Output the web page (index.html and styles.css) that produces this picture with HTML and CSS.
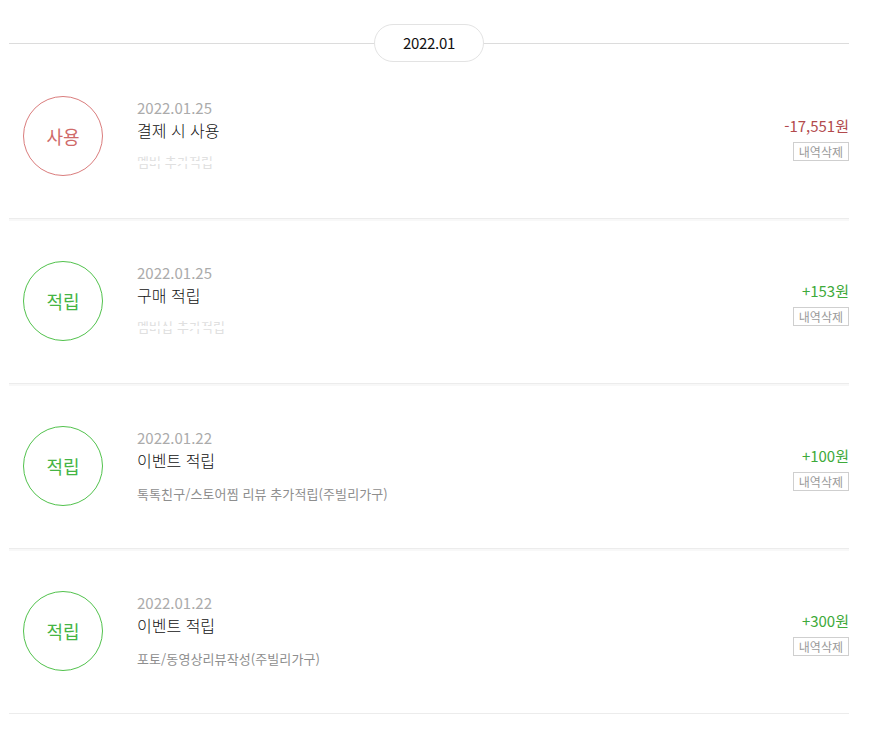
FILE: index.html
```html
<!DOCTYPE html>
<html lang="ko">
<head>
<meta charset="utf-8">
<link rel="stylesheet" href="styles.css">
</head>
<body>
<div class="list">
  <div class="month">
    <span class="month-pill">2022.01</span>
  </div>

  <div class="row first">
    <div class="badge use">사용</div>
    <div class="info">
      <div class="date">2022.01.25</div>
      <div class="title">결제 시 사용</div>
      <div class="desc masked">멤버 추가적립</div>
    </div>
    <div class="side">
      <div class="amount minus">-17,551원</div>
      <button class="del">내역삭제</button>
    </div>
  </div>

  <div class="row">
    <div class="badge save">적립</div>
    <div class="info">
      <div class="date">2022.01.25</div>
      <div class="title">구매 적립</div>
      <div class="desc masked">멤버십 추가적립</div>
    </div>
    <div class="side">
      <div class="amount plus">+153원</div>
      <button class="del">내역삭제</button>
    </div>
  </div>

  <div class="row">
    <div class="badge save">적립</div>
    <div class="info">
      <div class="date">2022.01.22</div>
      <div class="title">이벤트 적립</div>
      <div class="desc">톡톡친구/스토어찜 리뷰 추가적립(주빌리가구)</div>
    </div>
    <div class="side">
      <div class="amount plus">+100원</div>
      <button class="del">내역삭제</button>
    </div>
  </div>

  <div class="row">
    <div class="badge save">적립</div>
    <div class="info">
      <div class="date">2022.01.22</div>
      <div class="title">이벤트 적립</div>
      <div class="desc">포토/동영상리뷰작성(주빌리가구)</div>
    </div>
    <div class="side">
      <div class="amount plus">+300원</div>
      <button class="del">내역삭제</button>
    </div>
  </div>
</div>
</body>
</html>
```

FILE: styles.css
```css
html, body {
  margin: 0;
  padding: 0;
  background: #fff;
}
body {
  font-family: "Noto Sans CJK KR", "Noto Sans", sans-serif;
  color: #111;
}
.list {
  width: 840px;
  margin-left: 9px;
}
.month {
  height: 62px;
  display: flex;
  align-items: flex-end;
  justify-content: center;
  position: relative;
}
.month::before {
  content: "";
  position: absolute;
  left: 0;
  right: 0;
  top: 43px;
  border-top: 1px solid #dcdcdc;
}
.month-pill {
  position: relative;
  box-sizing: border-box;
  width: 110px;
  height: 38px;
  border: 1px solid #e3e3e3;
  border-radius: 19px;
  background: #fff;
  font-size: 15px;
  line-height: 36px;
  text-align: center;
  color: #111;
  letter-spacing: -0.3px;
}
.row {
  display: flex;
  align-items: flex-start;
  padding: 42px 0 42px 14px;
  border-bottom: 1px solid #ececec;
  box-shadow: 0 2px 0 #f8f8f8;
}
.row.first {
  padding-top: 34px;
}
.badge {
  box-sizing: border-box;
  flex: none;
  width: 80px;
  height: 80px;
  border-radius: 50%;
  border: 1px solid;
  display: flex;
  align-items: center;
  justify-content: center;
  font-size: 18px;
}
.badge.use {
  border-color: #da7d7d;
  color: #cf6a6a;
}
.badge.save {
  border-color: #52c24d;
  color: #45b545;
}
.info {
  flex: 1;
  margin-left: 34px;
  padding-top: 2px;
}
.date {
  font-size: 15px;
  line-height: 20px;
  color: #ababab;
}
.title {
  font-size: 16px;
  line-height: 24px;
  color: #111;
  font-weight: 300;
}
.desc {
  margin-top: 12px;
  font-size: 13px;
  line-height: 20px;
  color: #8e8e8e;
  letter-spacing: 0.1px;
}
.desc.masked {
  position: relative;
  display: inline-block;
  margin-top: 11px;
  color: #e0e0e0;
  line-height: 18px;
}
.desc.masked::after {
  content: "";
  position: absolute;
  left: 0;
  right: 0;
  top: 8px;
  height: 3px;
  background: #fff;
}
.side {
  display: flex;
  flex-direction: column;
  align-items: flex-end;
  padding-top: 20px;
}
.amount {
  font-size: 15px;
  line-height: 20px;
}
.amount.minus { color: #b24a4d; }
.amount.plus { color: #3eaa3a; }
.del {
  margin-top: 6px;
  box-sizing: border-box;
  height: 19px;
  padding: 0 5px;
  border: 1px solid #cfcfcf;
  background: #fff;
  font-family: inherit;
  font-size: 12px;
  line-height: 17px;
  color: #9a9a9a;
}
```
